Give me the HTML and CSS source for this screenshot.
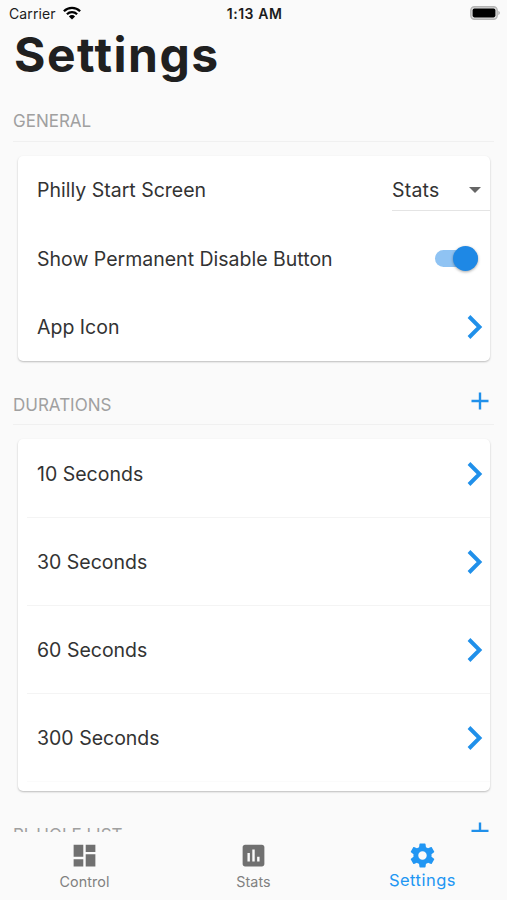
FILE: index.html
```
<!DOCTYPE html>
<html lang="en">
<head>
<meta charset="utf-8">
<title>Settings</title>
<link rel="stylesheet" href="styles.css">
</head>
<body>
<svg class="defs" aria-hidden="true">
  <symbol id="chevron" viewBox="0 0 16 24"><path d="M2 1.500 12.500 12 2 22.500" fill="none" stroke="currentColor" stroke-width="3.900"/></symbol>
  <symbol id="plus" viewBox="0 0 18 18"><path d="M9 .5v17M.5 9h17" fill="none" stroke="currentColor" stroke-width="2.400"/></symbol>
</svg>
<header class="status">
  <div class="carrier"><span>Carrier</span>
    <svg class="wifi" viewBox="0 0 18 14"><g fill="none" stroke="#000" stroke-width="2.300"><path d="M.9 5.200a11.600 11.600 0 0 1 16.200 0"/><path d="M3.900 8.300a7.300 7.300 0 0 1 10.200 0"/></g><path d="M9 13.600 5.900 10.400a4.400 4.400 0 0 1 6.200 0Z"/></svg>
  </div>
  <div class="time">1:13 AM</div>
  <svg class="battery" viewBox="0 0 30 14"><rect x=".8" y=".8" width="26.400" height="12.400" rx="3.600" fill="#ddd" stroke="#b4b4b4" stroke-width="1.400"/><rect x="2.600" y="2.600" width="22.800" height="8.800" rx="1.800"/><path d="M28.400 4.800q3 2.200 0 4.400Z" fill="#aaa"/></svg>
</header>
<main class="content">
  <h1>Settings</h1>
  <section>
    <div class="section-head first"><h2>GENERAL</h2></div>
    <div class="card general">
      <div class="row"><span>Philly Start Screen</span>
        <div class="select"><span>Stats</span><i class="caret"></i></div>
      </div>
      <div class="row"><span>Show Permanent Disable Button</span><div class="switch"><i class="knob"></i></div></div>
      <div class="row"><span>App Icon</span><svg class="chevron"><use href="#chevron"/></svg></div>
    </div>
  </section>
  <section>
    <div class="section-head"><h2>DURATIONS</h2><svg class="plus"><use href="#plus"/></svg></div>
    <div class="card list">
      <div class="row"><span>10 Seconds</span><svg class="chevron"><use href="#chevron"/></svg></div>
      <div class="row"><span>30 Seconds</span><svg class="chevron"><use href="#chevron"/></svg></div>
      <div class="row"><span>60 Seconds</span><svg class="chevron"><use href="#chevron"/></svg></div>
      <div class="row"><span>300 Seconds</span><svg class="chevron"><use href="#chevron"/></svg></div>
    </div>
  </section>
  <section>
    <div class="section-head"><h2>PI-HOLE LIST</h2><svg class="plus"><use href="#plus"/></svg></div>
  </section>
</main>
<nav class="tabs">
  <div class="tab"><svg viewBox="0 0 24 24"><path d="M3 13h8V3H3v10zm0 8h8v-6H3v6zm10 0h8V11h-8v10zm0-18v6h8V3h-8z"/></svg><span>Control</span></div>
  <div class="tab"><svg viewBox="0 0 24 24"><path d="M19 3H5c-1.100 0-2 .9-2 2v14c0 1.100.9 2 2 2h14c1.100 0 2-.9 2-2V5c0-1.100-.9-2-2-2zM9 17H7v-7h2v7zm4 0h-2V7h2v10zm4 0h-2v-4h2v4z"/></svg><span>Stats</span></div>
  <div class="tab active"><svg viewBox="0 0 24 24"><path d="M19.430 12.980c.040-.320.070-.640.070-.980s-.030-.660-.070-.980l2.110-1.650c.190-.150.240-.420.120-.640l-2-3.460c-.120-.220-.390-.300-.610-.220l-2.490 1c-.520-.400-1.080-.730-1.690-.980l-.380-2.650C14.460 2.180 14.250 2 14 2h-4c-.250 0-.460.180-.490.420l-.380 2.650c-.610.250-1.170.590-1.690.980l-2.490-1c-.230-.090-.490 0-.610.220l-2 3.460c-.130.220-.070.490.120.640l2.110 1.650c-.040.320-.070.650-.070.980s.030.660.070.980l-2.110 1.650c-.190.150-.240.420-.120.640l2 3.460c.120.220.390.300.610.220l2.490-1c.520.400 1.080.730 1.690.980l.380 2.650c.030.240.240.420.490.420h4c.250 0 .460-.180.490-.420l.380-2.650c.610-.250 1.170-.590 1.690-.980l2.490 1c.230.090.490 0 .610-.220l2-3.460c.120-.220.070-.490-.120-.640l-2.110-1.650zM12 15.500c-1.930 0-3.500-1.570-3.500-3.500s1.570-3.500 3.500-3.500 3.500 1.570 3.500 3.500-1.570 3.500-3.500 3.500z"/></svg><span>Settings</span></div>
</nav>
</body>
</html>
```
FILE: styles.css
```
* { box-sizing: border-box; }
body {
  margin: 0;
  height: 900px;
  display: flex;
  flex-direction: column;
  overflow: hidden;
  background: #fafafa;
  color: #333;
  font-family: Inter, "Liberation Sans", sans-serif;
}
svg { display: block; flex: none; }
.defs { display: none; }
.status {
  height: 24px;
  flex: none;
  display: grid;
  grid-template-columns: 1fr auto 1fr;
  align-items: center;
  padding: 3px 7px 0 9px;
  color: #1c1c1c;
  font-size: 14px;
}
.carrier { display: flex; align-items: center; gap: 7px; letter-spacing: .1px; }
.wifi { width: 18px; height: 14px; margin-top: -1px; }
.time { font-weight: 600; letter-spacing: .55px; }
.battery { width: 30px; height: 14px; justify-self: end; margin-top: -1px; }
.content { height: 808px; flex: none; overflow: hidden; }
h1 {
  margin: 0;
  height: 76px;
  padding: 5px 0 0 14px;
  font-size: 48px;
  font-weight: 700;
  line-height: 52px;
  letter-spacing: 1.5px;
  color: #202020;
}
.section-head {
  height: 64px;
  margin: 0 13px;
  padding: 22px 5px 0 0;
  display: flex;
  justify-content: space-between;
  align-items: flex-start;
  border-bottom: 1px solid #f0f0f0;
}
.section-head.first { height: 42px; padding-top: 0; }
h2 {
  margin: 12px 0 0;
  font-size: 17px;
  line-height: 20px;
  font-weight: 400;
  color: #a0a0a0;
}
.first h2 { margin-top: 11px; }
.plus { width: 18px; height: 18px; color: #2090ea; margin-top: 8.5px; }
.card {
  margin: 14px 17px 0 18px;
  background: #fff;
  border-radius: 5px;
  box-shadow: 0 1px 2px rgba(0, 0, 0, .25);
}
.general { height: 205px; }
.row {
  height: 88px;
  padding: 0 7px 0 19px;
  display: flex;
  justify-content: space-between;
  align-items: center;
  font-size: 19.5px;
}
.general .row { height: 68.5px; }
.select {
  align-self: stretch;
  width: 98px;
  height: 55px;
  margin-right: -7px;
  padding: 14px 9px 0 0;
  display: flex;
  align-items: center;
  justify-content: space-between;
  border-bottom: 1px solid #e4e4e4;
  letter-spacing: .2px;
}
.caret { border: 6px solid transparent; border-top-color: #666; border-bottom: 0; }
.switch {
  width: 43px;
  height: 17px;
  margin-right: 5px;
  border-radius: 9px;
  background: #8fc3f3;
  display: flex;
  align-items: center;
  justify-content: flex-end;
}
.knob {
  width: 25px;
  height: 25px;
  flex: none;
  border-radius: 50%;
  background: #1e88e5;
  box-shadow: 0 1px 3px rgba(0, 0, 0, .35);
}
.chevron { width: 16px; height: 24px; color: #2090ea; }
.list { height: 352px; }
.list .row { position: relative; }
.list .row:first-child { height: 79px; padding-bottom: 9px; }
.list .row::after {
  content: "";
  position: absolute;
  left: 9px;
  right: 0;
  bottom: 0;
  height: 1px;
  background: #f4f4f4;
}
.list .row:last-child::after { background: #fbfbfb; }
.tabs { height: 68px; flex: none; display: grid; grid-template-columns: repeat(3, 1fr); }
.tab {
  padding-top: 9px;
  display: flex;
  flex-direction: column;
  align-items: center;
  font-size: 14.3px;
  line-height: 18px;
  letter-spacing: .1px;
  color: #808080;
}
.tab svg { width: 29px; height: 29px; fill: #707070; }
.tab span { margin-top: 3px; }
.active { color: #2196f3; font-size: 16.5px; letter-spacing: .5px; }
.active svg { fill: #2196f3; }
.active span { margin-top: 1px; }
```
